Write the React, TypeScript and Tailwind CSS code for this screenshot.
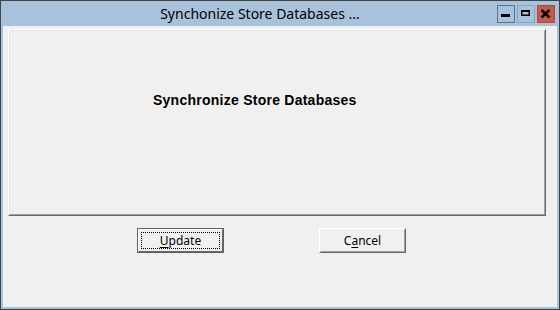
export default function App() {
  return (
    <div className="w-[560px] h-[310px] border border-[#434343] bg-[#a9c2dc] flex flex-col px-[2px] pb-[2px]">
      {/* title bar */}
      <div className="h-[25px] shrink-0 flex">
        <div className="flex-1 flex justify-center pl-[20px] pt-[3px] text-[14px] leading-[20px] text-black font-['Noto_Sans','Open_Sans',sans-serif]">
          Synchonize Store Databases ...
        </div>
        <div className="flex items-start gap-[2px] pt-[4px] pr-[2px]">
          <div className="w-[18px] h-[18px] border border-[#5b7590] bg-[#a9c2dc] flex items-center justify-center">
            <svg width="16" height="16" viewBox="0 0 16 16">
              <rect x="3" y="8" width="9" height="3" fill="#000" />
            </svg>
          </div>
          <div className="w-[18px] h-[18px] border border-[#8ca5be] bg-[#a9c2dc] flex items-center justify-center">
            <svg width="16" height="16" viewBox="0 0 16 16">
              <path d="M3 4h9v6H3z M4.5 6h6v2.5h-6z" fill="#000" fillRule="evenodd" />
            </svg>
          </div>
          <div className="w-[18px] h-[18px] border border-[#a9493f] bg-[#c9594b] flex items-center justify-center">
            <svg width="16" height="16" viewBox="0 0 16 16">
              <path d="M3.5 4l8 7.5M11.5 4l-8 7.5" stroke="#000" strokeWidth="2.4" />
            </svg>
          </div>
        </div>
      </div>

      {/* client area */}
      <div className="flex-1 bg-[#f0f0f0] flex flex-col pl-[5px] pr-[11px] pt-[3px]">
        <div className="h-[187px] border-t border-l border-white border-r border-b border-r-[#696969] border-b-[#696969]">
          <div className="h-full border-t border-l border-[#e3e3e3] border-r border-b border-r-[#a0a0a0] border-b-[#a0a0a0] pt-[61px] pl-[143px]">
            <div className="text-[14px] leading-[17px] tracking-[0.25px] font-bold text-black font-['Liberation_Sans',Arial,sans-serif]">
              Synchronize Store Databases
            </div>
          </div>
        </div>

        <div className="flex mt-[12px] pl-[129px] gap-[95px] font-['Noto_Sans','Open_Sans',sans-serif] text-[12px] text-black">
          <button className="w-[87px] h-[25px] border border-[#646464] bg-[#f0f0f0] p-0">
            <div className="h-full border-t border-l border-white border-r border-b border-r-[#696969] border-b-[#696969] p-[2px]">
              <div className="h-full border border-dotted border-black flex items-center justify-center leading-none">
                <span>
                  <span className="underline underline-offset-2">U</span>pdate
                </span>
              </div>
            </div>
          </button>
          <button className="w-[87px] h-[25px] border-t border-l border-white border-r border-b border-r-[#696969] border-b-[#696969] bg-[#f0f0f0] p-0">
            <div className="h-full border-t border-l border-[#f0f0f0] border-r border-b border-r-[#a0a0a0] border-b-[#a0a0a0] flex items-center justify-center leading-none">
              <span>
                C<span className="underline underline-offset-2">a</span>ncel
              </span>
            </div>
          </button>
        </div>
      </div>
    </div>
  );
}
